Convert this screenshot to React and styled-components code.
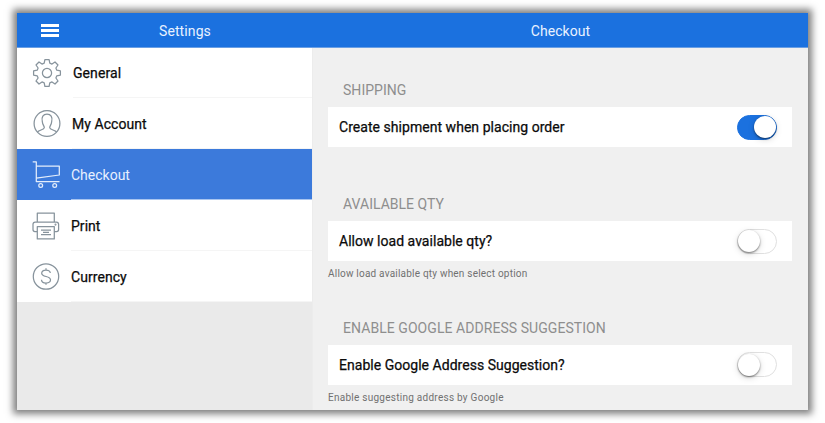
import React from "react";
import styled, { createGlobalStyle, css } from "styled-components";

const GlobalStyle = createGlobalStyle`
  *, *::before, *::after { box-sizing: border-box; }
  body { margin: 0; background: #fff; font-family: Roboto, sans-serif; overflow: hidden; }
`;

const Page = styled.div`
  height: 423px;
  padding: 13px 17px;
`;

const Window = styled.div`
  width: 791px;
  height: 397px;
  display: grid;
  grid-template: 35px 1fr / 296px 1fr;
  background: #f0f0f0;
  box-shadow: 0 0 7px 4px rgba(0, 0, 0, 0.5);
`;

const Header = styled.header`
  display: flex;
  align-items: center;
  justify-content: center;
  padding-top: 2px;
  background: #1b71df;
  border-bottom: 1px solid #6a9fe4;
  color: #e9f2ff;
`;

const MenuButton = styled.button`
  display: flex;
  flex-direction: column;
  gap: 2px;
  width: 18px;
  margin: -2px 100px 0 24px;
  padding: 0;
  border: 0;
  background: none;
`;

const MenuBar = styled.span`
  height: 3px;
  background: #fff;
`;

const SidebarHeader = styled(Header)`
  justify-content: flex-start;
`;

const Title = styled.h1`
  margin: 0;
  font-size: 14px;
  line-height: 18px;
  font-weight: 400;
  letter-spacing: ${(p) => p.$spacing}px;
`;

const Sidebar = styled.nav`
  background: #eaeaea;
  border-right: 1px solid #ececec;
`;

const NavItem = styled.a`
  display: flex;
  height: ${(p) => p.$height}px;
  padding-left: ${(p) => p.$inset}px;
  background: ${(p) => (p.$active ? "#3c7adb" : "#fff")};
  color: ${(p) => (p.$active ? "#e8f0ff" : "#0b0b0b")};
`;

const IconBox = styled.span`
  display: flex;
  align-items: center;
  width: ${(p) => p.$width}px;
  color: ${(p) => (p.$active ? "#e3edfb" : "#87939c")};
`;

const NavLabel = styled.span`
  flex: 1;
  display: flex;
  align-items: center;
  padding-top: ${(p) => p.$drop}px;
  border-bottom: 1px solid ${(p) => (p.$active ? "#a9c5f0" : "#f5f5f5")};
  font-size: 14px;
  letter-spacing: ${(p) => p.$spacing}px;
  -webkit-text-stroke: ${(p) => (p.$active ? 0 : 0.25)}px currentColor;
`;

const Content = styled.main`
  display: flex;
  flex-direction: column;
  padding: 34px 16px 0 15px;
`;

const Section = styled.section`
  height: ${(p) => p.$height}px;
`;

const SectionTitle = styled.h2`
  margin: 0 0 8px 15px;
  font-size: 14px;
  line-height: 17px;
  font-weight: 400;
  letter-spacing: ${(p) => p.$spacing}px;
  color: #8e8e8e;
`;

const Option = styled.label`
  display: flex;
  align-items: center;
  justify-content: space-between;
  height: 40px;
  padding: 0 15px 0 11px;
  background: #fff;
`;

const OptionLabel = styled.span`
  font-size: 14px;
  letter-spacing: ${(p) => p.$spacing}px;
  color: #0b0b0b;
  -webkit-text-stroke: 0.25px currentColor;
  white-space: nowrap;
`;

const Hint = styled.p`
  margin: 6px 0 0;
  font-size: 10px;
  line-height: 14px;
  letter-spacing: ${(p) => p.$spacing}px;
  color: #707070;
`;

const Track = styled.span`
  display: flex;
  align-items: center;
  width: 40px;
  height: 25px;
  border: 1px solid #e0e0e0;
  border-radius: 13px;
  background: #fff;
  ${(p) =>
    p.$on &&
    css`
      justify-content: flex-end;
      border-color: #1b71df;
      background: #1b71df;
    `}
`;

const Knob = styled.span`
  width: 22px;
  height: 22px;
  border-radius: 50%;
  background: #fff;
  box-shadow: 0 1px 2px rgba(0, 0, 0, 0.5), 0 2px 7px rgba(0, 0, 0, 0.14);
`;

const Drawing = styled.svg`
  display: block;
  flex: none;
  fill: none;
  stroke: currentColor;
  stroke-width: 1.25;
  stroke-linejoin: round;
`;

const GearIcon = () => (
  <Drawing width="30" height="30" viewBox="-15 -15 30 30">
    <path d="M-2.1-13.4H2.1L2.8-9.8L5-8.9L8-11L11-8L8.9-5L9.8-2.8L13.4-2.1V2.1L9.8 2.8L8.9 5L11 8L8 11L5 8.9L2.8 9.8L2.1 13.4H-2.1L-2.8 9.8L-5 8.9L-8 11L-11 8L-8.9 5L-9.8 2.8L-13.4 2.1V-2.1L-9.8-2.8L-8.9-5L-11-8L-8-11L-5-8.9L-2.8-9.8Z" />
    <circle r="4.6" />
  </Drawing>
);

const AccountIcon = () => (
  <Drawing width="28" height="28" viewBox="-14 -13.5 28 28">
    <circle r="12.9" />
    <path d="M-9.5 8.5C-8 6.6-2.9 6.2-2.7 4.3C-2.6 2.2-4.5 1.4-4.7-2C-5.8-6.5-3.8-9.4 0-9.4S5.8-6.5 4.7-2C4.5 1.4 2.6 2.2 2.7 4.3C2.9 6.2 8 6.6 9.5 8.5" />
  </Drawing>
);

const CartIcon = () => (
  <Drawing width="28" height="28" viewBox="0 0 28 28">
    <path d="M.7 .8H4.3V20.5H27.5M4.3 5H27.3V14L4.3 17.2" />
    <circle cx="8.7" cy="24.5" r="1.9" />
    <circle cx="22.7" cy="24.5" r="1.9" />
  </Drawing>
);

const PrinterIcon = () => (
  <Drawing width="28" height="28" viewBox="0 0 28 28">
    <path d="M5.3 10V1H22.3V10M5.3 19.5H3Q1 19.5 1 17.5V12.3Q1 10 3.2 10H24.4Q26.6 10 26.6 12.3V17.5Q26.6 19.5 24.6 19.5H22.3M5.3 14.5H22.3V26.9H5.3ZM9 18H19M11 20.3H17M9 22.6H19" />
    <circle cx="23.5" cy="12.6" r=".4" />
  </Drawing>
);

const CurrencyIcon = () => (
  <Drawing width="28" height="28" viewBox="-14 -13.5 28 28">
    <circle r="12.7" />
    <path d="M4.3-3.5C4.1-5.5 2.5-6.5 0-6.5S-4.3-5.2-4.3-3.3C-4.3 1 4.5-1 4.5 3.3C4.5 5.2 2.8 6.5 0 6.5S-4.4 5.2-4.5 3.2M0-8.2V-6.5M0 6.5V8.2" />
  </Drawing>
);

const navItems = [
  { label: "General", Icon: GearIcon, inset: 15, width: 41, height: 50, drop: 0, spacing: 0.08 },
  { label: "My Account", Icon: AccountIcon, inset: 16, width: 39, height: 51, drop: 2, spacing: 0.06 },
  { label: "Checkout", Icon: CartIcon, inset: 15, width: 39, height: 51, drop: 2, spacing: 0 },
  { label: "Print", Icon: PrinterIcon, inset: 15, width: 39, height: 51, drop: 2, spacing: 0.03 },
  { label: "Currency", Icon: CurrencyIcon, inset: 15, width: 39, height: 51, drop: 2, spacing: 0.06 },
];

const activeLabel = "Checkout";

const sections = [
  { title: "SHIPPING", titleSpacing: 0.04, option: "Create shipment when placing order", spacing: 0.04, on: true, height: 114 },
  { title: "AVAILABLE QTY", titleSpacing: 0.02, option: "Allow load available qty?", spacing: 0.03, hint: "Allow load available qty when select option", hintSpacing: 0.21, height: 123.5 },
  { title: "ENABLE GOOGLE ADDRESS SUGGESTION", titleSpacing: 0.06, option: "Enable Google Address Suggestion?", spacing: 0.03, hint: "Enable suggesting address by Google", hintSpacing: 0.26, height: 90 },
];

export default function App() {
  return (
    <Page>
      <GlobalStyle />
      <Window>
        <SidebarHeader>
          <MenuButton aria-label="Menu">
            <MenuBar />
            <MenuBar />
            <MenuBar />
          </MenuButton>
          <Title $spacing={0.1}>Settings</Title>
        </SidebarHeader>
        <Header>
          <Title $spacing={0.05}>Checkout</Title>
        </Header>
        <Sidebar>
          {navItems.map(({ label, Icon, inset, width, height, drop, spacing }) => {
            const active = label === activeLabel;
            return (
              <NavItem key={label} $inset={inset} $height={height} $active={active}>
                <IconBox $width={width} $active={active}>
                  <Icon />
                </IconBox>
                <NavLabel $active={active} $drop={drop} $spacing={spacing}>{label}</NavLabel>
              </NavItem>
            );
          })}
        </Sidebar>
        <Content>
          {sections.map((s) => (
            <Section key={s.title} $height={s.height}>
              <SectionTitle $spacing={s.titleSpacing}>{s.title}</SectionTitle>
              <Option>
                <OptionLabel $spacing={s.spacing}>{s.option}</OptionLabel>
                <Track role="switch" aria-checked={!!s.on} $on={s.on}>
                  <Knob />
                </Track>
              </Option>
              {s.hint && <Hint $spacing={s.hintSpacing}>{s.hint}</Hint>}
            </Section>
          ))}
        </Content>
      </Window>
    </Page>
  );
}
